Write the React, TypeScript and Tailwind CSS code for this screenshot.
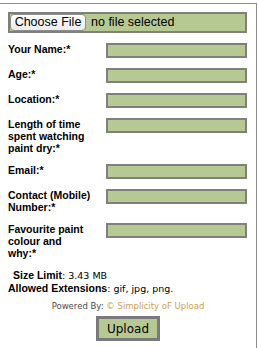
import React, { useState } from 'react';

const fields = [
  { id: 'name', label: ['Your Name:*'] },
  { id: 'age', label: ['Age:*'] },
  { id: 'location', label: ['Location:*'] },
  { id: 'paint', label: ['Length of time', 'spent watching', 'paint dry:*'] },
  { id: 'email', label: ['Email:*'] },
  { id: 'contact', label: ['Contact (Mobile)', 'Number:*'] },
  { id: 'colour', label: ['Favourite paint', 'colour and', 'why:*'] },
];

function App() {
  const [fileName, setFileName] = useState('');

  return (
    <div className="w-[258px] h-[348px] bg-white overflow-hidden">
      <div className="mt-[3px] w-[257px] h-[345px] border-t border-r border-[#8d8d8d] pt-[8px]">
        {/* file picker */}
        <label className="mx-[8px] flex h-[21px] w-[239px] items-center border-2 border-[#7f7f7b] bg-[#b7c993] cursor-pointer">
          <input
            type="file"
            className="hidden"
            onChange={e => setFileName(e.target.files?.[0]?.name || '')}
          />
          <span className="flex h-[17px] w-[76px] items-center justify-center rounded-[4px] border border-[#8e8e8e] bg-gradient-to-b from-white to-[#ececec] font-['Liberation_Sans',sans-serif] text-[12.5px] leading-none text-black">
            Choose File
          </span>
          <span className="ml-[5px] font-['Liberation_Sans',sans-serif] text-[12.5px] leading-none text-black">
            {fileName || 'no file selected'}
          </span>
        </label>

        {/* fields */}
        <div className="mt-[10px] flex flex-col gap-[10px] px-[8px]">
          {fields.map(f => (
            <div key={f.id} className="flex items-start">
              <div className="w-[98px] font-['Liberation_Sans',sans-serif] text-[10.5px] font-bold leading-[12px] text-black">
                {f.label.map(l => (
                  <div key={l}>{l}</div>
                ))}
              </div>
              <input
                className="h-[15px] w-[141px] border-2 border-[#7f7f7b] bg-[#b7c993] outline-none"
                name={f.id}
              />
            </div>
          ))}
        </div>

        {/* limits */}
        <div className="mt-[10px] px-[8px] text-[9.5px] leading-[13px] text-black">
          <div className="pl-[5px]">
            <span className="font-['Liberation_Sans',sans-serif] font-bold text-[10.5px]">Size Limit</span>
            <span className="font-['DejaVu_Sans',sans-serif]">: 3.43 MB</span>
          </div>
          <div>
            <span className="font-['Liberation_Sans',sans-serif] font-bold text-[10.5px]">Allowed Extensions</span>
            <span className="font-['DejaVu_Sans',sans-serif]">: gif, jpg, png.</span>
          </div>
        </div>

        <div className="mt-[5px] text-center font-['DejaVu_Sans',sans-serif] text-[8.5px] leading-[12px] text-[#4a4a4a]">
          Powered By: <span className="text-[#c9a050]">© Simplicity oF Upload</span>
        </div>

        <div className="mt-[4px] flex justify-center">
          <button className="h-[25px] w-[64px] border-[3px] border-[#7a7a7a] bg-[#b7c993] font-['DejaVu_Sans',sans-serif] text-[12px] leading-none text-black">
            Upload
          </button>
        </div>
      </div>
    </div>
  );
}

export default App;
